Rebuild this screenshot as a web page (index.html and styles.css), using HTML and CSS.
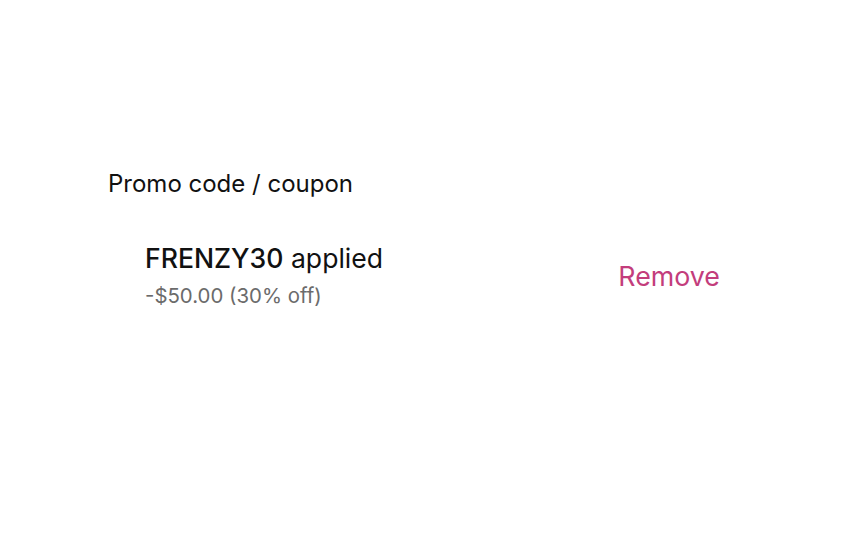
FILE: index.html
```html
<!DOCTYPE html>
<html>
<head><meta charset="utf-8"><link rel="stylesheet" href="styles.css"></head>
<body>
<div class="panel">
  <div class="label">Promo code / coupon</div>
  <div class="row">
    <div class="info">
      <div class="title"><span class="code">FRENZY30</span> applied</div>
      <div class="sub">-$50.00 (30% off)</div>
    </div>
    <button class="remove">Remove</button>
  </div>
</div>
</body>
</html>
```
FILE: styles.css
```css
html, body { margin: 0; padding: 0; background: #fff; }
body { font-family: Inter, "Noto Sans", sans-serif; color: #111; }
.panel { width: 648px; margin-left: 108px; padding-top: 169px; }
.label { font-size: 24px; line-height: 30px; color: #111; }
.row { display: flex; align-items: center; justify-content: space-between; padding: 0 36px 0 37px; margin-top: 43px; }
.title { font-size: 26.6px; line-height: 32px; color: #111; }
.code { font-weight: 500; }
.sub { font-size: 20.4px; line-height: 26px; color: #6b6b6b; margin-top: 9px; }
.remove { background: none; border: 0; padding: 0; font-family: inherit; font-size: 26.8px; color: #c33d7c; cursor: pointer; }
```
